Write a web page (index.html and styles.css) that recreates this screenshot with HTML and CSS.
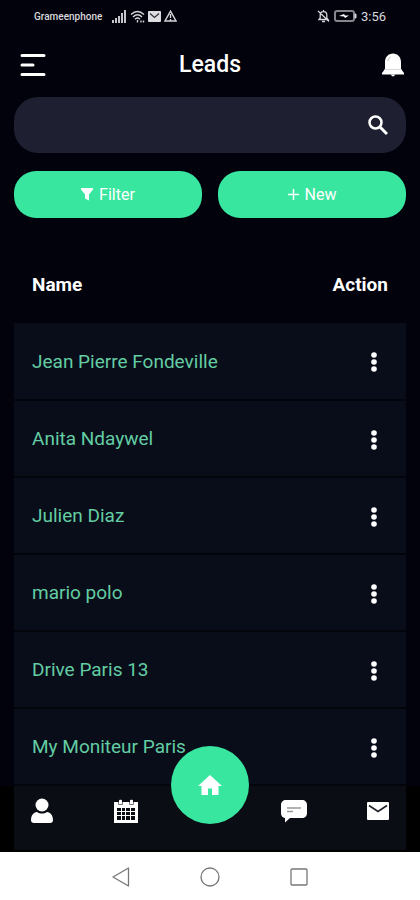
FILE: index.html
```html
<!DOCTYPE html>
<html lang="en">
<head>
    <meta charset="UTF-8">
    <meta name="viewport" content="width=device-width, initial-scale=1.0">
    <title>Leads</title>
    <link rel="stylesheet" href="styles.css">
</head>
<body>
    <div class="status-bar">
        <div class="status-left">
            <span class="carrier">Grameenphone</span>
            <svg width="15" height="13" viewBox="0 0 15 13" fill="#c4c4ca">
                <path d="M0 10h2v3H0zM3 8h2v5H3zM6 6h2v7H6zM9 3h2v10H9zM12 0h2v13h-2z"/>
            </svg>
            <svg width="15" height="13" viewBox="0 0 15 13" fill="none" stroke="#d4d4d8" stroke-width="1.4">
                <path d="M1 4.500Q7.500-1.500 14 4.500M3 7Q7.500 2.500 12 7M5 9.200Q7.500 7 10 9.200"/>
                <path d="M7.500 10v2.500M11 10.500v2M13.500 10.500v2"/>
            </svg>
            <svg width="13" height="11" viewBox="0 0 13 11">
                <rect width="13" height="11" rx="1" fill="#dedee2"/>
                <path d="M2 2.500l4.500 4 4.500-4" fill="none" stroke="#33333c" stroke-width="1.300"/>
            </svg>
            <svg width="13" height="12" viewBox="0 0 13 12" fill="none" stroke="#d4d4d8" stroke-width="1.400">
                <path d="M6.500 1.200L12 11H1zM6.500 4v4M6.500 9v1.500"/>
            </svg>
        </div>
        <div class="status-right">
            <svg width="13" height="14" viewBox="0 0 13 14" fill="none" stroke="#d4d4d8" stroke-width="1.300">
                <path d="M2 10.500h9L9.800 9V6c0-2-1.300-3.300-3.300-3.300S3.200 4 3.200 6v3zM6.500 1v1.500M5 12.500h3M1 2l11 10.500"/>
            </svg>
            <svg width="23" height="12" viewBox="0 0 23 12">
                <rect x="1" y="1" width="19" height="10" rx="2" fill="none" stroke="#85858c" stroke-width="2"/>
                <path d="M21 4h1v4h-1z" fill="#d4d4d8" stroke="#d4d4d8"/>
                <path d="M5 6l5-2 1 1.500h4L11 8l-1-1.500z" fill="#fff"/>
            </svg>
            <span class="clock">3:56</span>
        </div>
    </div>

    <header class="header">
        <button class="icon-button menu-button" type="button" aria-label="Menu">
            <svg width="26" height="24" viewBox="0 0 26 24" stroke="#fff" stroke-width="3" stroke-linecap="round">
                <path d="M2 2.500h22M2 12h11M2 21.500h22"/>
            </svg>
        </button>
        <h1>Leads</h1>
        <button class="icon-button bell-button" type="button" aria-label="Notifications">
            <svg width="22" height="24" viewBox="0 0 22 24">
                <path d="M3 16V9c0-5 3.500-8.500 8-8.500s8 3.500 8 8.500v7l3 4v1.500H0V20z" fill="#fff"/>
                <path d="M9 21.500c.5 2.500 3.500 2.500 4 0z" fill="#fff"/>
                <path d="M2.500 16.500h17" stroke="#d8d8dc"/>
                <path d="M6 8c0-2 1-3 2.500-3.800" fill="none" stroke="#bbb"/>
            </svg>
        </button>
    </header>

    <main class="content">
        <form class="search">
            <input class="search-input" type="text" aria-label="Search leads">
            <button class="search-button" type="submit" aria-label="Search">
                <svg width="20" height="20" viewBox="0 0 20 20" fill="none" stroke="#fff">
                    <circle cx="7.500" cy="7.500" r="6" stroke-width="2.500"/>
                    <path d="M12 12l7 7" stroke-width="3"/>
                </svg>
            </button>
        </form>

        <div class="actions">
            <button class="action-button" type="button">
                <svg width="12" height="13" viewBox="0 0 12 13" fill="#fff">
                    <path d="M0 0h12v1.500L8 6.500v6L4 10.500v-4L0 1.500z"/>
                </svg>
                Filter
            </button>
            <button class="action-button" type="button">
                <svg width="11" height="11" viewBox="0 0 11 11" stroke="#fff" stroke-width="1.500">
                    <path d="M5.500 0v11M0 5.500h11"/>
                </svg>
                New
            </button>
        </div>

        <table class="leads">
            <thead>
                <tr><th>Name</th><th class="action-cell">Action</th></tr>
            </thead>
            <tbody>
                <tr>
                    <td><a href="#">Jean Pierre Fondeville</a></td>
                    <td class="action-cell"><button class="more" type="button" aria-label="More"><svg width="6" height="20" viewBox="0 0 6 20" fill="#fff"><circle cx="3" cy="3" r="2.800"/><circle cx="3" cy="10" r="2.800"/><circle cx="3" cy="17" r="2.800"/></svg></button></td>
                </tr>
                <tr>
                    <td><a href="#">Anita Ndaywel</a></td>
                    <td class="action-cell"><button class="more" type="button" aria-label="More"><svg width="6" height="20" viewBox="0 0 6 20" fill="#fff"><circle cx="3" cy="3" r="2.800"/><circle cx="3" cy="10" r="2.800"/><circle cx="3" cy="17" r="2.800"/></svg></button></td>
                </tr>
                <tr>
                    <td><a href="#">Julien Diaz</a></td>
                    <td class="action-cell"><button class="more" type="button" aria-label="More"><svg width="6" height="20" viewBox="0 0 6 20" fill="#fff"><circle cx="3" cy="3" r="2.800"/><circle cx="3" cy="10" r="2.800"/><circle cx="3" cy="17" r="2.800"/></svg></button></td>
                </tr>
                <tr>
                    <td><a href="#">mario polo</a></td>
                    <td class="action-cell"><button class="more" type="button" aria-label="More"><svg width="6" height="20" viewBox="0 0 6 20" fill="#fff"><circle cx="3" cy="3" r="2.800"/><circle cx="3" cy="10" r="2.800"/><circle cx="3" cy="17" r="2.800"/></svg></button></td>
                </tr>
                <tr>
                    <td><a href="#">Drive Paris 13</a></td>
                    <td class="action-cell"><button class="more" type="button" aria-label="More"><svg width="6" height="20" viewBox="0 0 6 20" fill="#fff"><circle cx="3" cy="3" r="2.800"/><circle cx="3" cy="10" r="2.800"/><circle cx="3" cy="17" r="2.800"/></svg></button></td>
                </tr>
                <tr>
                    <td><a href="#">My Moniteur Paris</a></td>
                    <td class="action-cell"><button class="more" type="button" aria-label="More"><svg width="6" height="20" viewBox="0 0 6 20" fill="#fff"><circle cx="3" cy="3" r="2.800"/><circle cx="3" cy="10" r="2.800"/><circle cx="3" cy="17" r="2.800"/></svg></button></td>
                </tr>
            </tbody>
        </table>
    </main>

    <nav class="tab-bar">
        <a class="tab" href="#" aria-label="Profile">
            <svg width="22" height="26" viewBox="0 0 22 26" fill="#fff">
                <circle cx="11" cy="7" r="6.500"/>
                <path d="M0 22c0-4.500 2.500-7.500 6-8 3 2 7 2 10 0 3.500.5 6 3.500 6 8 0 2-1 3-3 3H3c-2 0-3-1-3-3z"/>
            </svg>
        </a>
        <a class="tab" href="#" aria-label="Calendar">
            <svg width="24" height="24" viewBox="0 0 24 24">
                <path d="M0 3h5V1.500C5 .5 8 .5 8 1.500V3h8V1.500c0-1 3-1 3 0V3h5v21H0z" fill="#fff"/>
                <path d="M3 9h4v3H3zM8 9h3v3H8zM12 9h4v3h-4zM17 9h4v3h-4zM3 13h4v3H3zM8 13h3v3H8zM12 13h4v3h-4zM17 13h4v3h-4zM3 17h4v4H3zM8 17h3v4H8zM12 17h4v4h-4zM17 17h4v4h-4z" fill="#0a0d13"/>
                <path d="M4.500 3v2.500h4V3M15.500 3v2.500h4V3" fill="none" stroke="#777"/>
            </svg>
        </a>
        <a class="home" href="#" aria-label="Home">
            <svg width="24" height="20" viewBox="0 0 24 20" fill="#fff">
                <path d="M12 0l12 11h-3.500v9H14v-6.500h-4V20H3.500v-9H0z"/>
            </svg>
        </a>
        <a class="tab tab-chat" href="#" aria-label="Messages">
            <svg width="26" height="23" viewBox="0 0 26 23">
                <path d="M5 0h16c3 0 5 2 5 5v8c0 3-2 5-5 5H9l-5 4.500V18c-2.500-.5-4-2-4-5V5c0-3 2-5 5-5z" fill="#fff"/>
                <path d="M6 8h14M6 11.500h6" stroke="#999" stroke-width="1.300"/>
            </svg>
        </a>
        <a class="tab" href="#" aria-label="Mail">
            <svg width="22" height="18" viewBox="0 0 22 18">
                <rect width="22" height="18" rx="1" fill="#fff"/>
                <path d="M2 3.500l9 6 9-6" fill="none" stroke="#22252b" stroke-width="1.800"/>
            </svg>
        </a>
    </nav>

    <div class="system-nav">
        <button class="icon-button" type="button" aria-label="Back">
            <svg width="18" height="20" viewBox="0 0 18 20" fill="none" stroke="#77777a" stroke-width="1.300" stroke-linejoin="round">
                <path d="M16.500 1v18L1 10z"/>
            </svg>
        </button>
        <button class="icon-button" type="button" aria-label="Home screen">
            <svg width="20" height="20" viewBox="0 0 20 20" fill="none" stroke="#77777a" stroke-width="1.300">
                <circle cx="10" cy="10" r="9"/>
            </svg>
        </button>
        <button class="icon-button" type="button" aria-label="Recent apps">
            <svg width="18" height="18" viewBox="0 0 18 18" fill="none" stroke="#77777a" stroke-width="1.300">
                <rect x="1" y="1" width="16" height="16" rx="1"/>
            </svg>
        </button>
    </div>
</body>
</html>
```

FILE: styles.css
```css
* {
    box-sizing: border-box;
}

body {
    display: flex;
    flex-direction: column;
    min-height: 100vh;
    margin: 0;
    font-family: Roboto, sans-serif;
    color: #fff;
    background-color: #01020c;
}

svg {
    display: block;
}

button {
    padding: 0;
    border: none;
    background: none;
    font-family: inherit;
    color: inherit;
    cursor: pointer;
}

.status-bar {
    display: flex;
    justify-content: space-between;
    align-items: center;
    height: 32px;
    padding: 0 34px;
    color: #d8d8dc;
}

.status-left,
.status-right {
    display: flex;
    align-items: center;
    gap: 3px;
}

.carrier {
    margin-right: 7px;
    font-size: 10px;
    font-weight: 500;
}

.status-right {
    gap: 4px;
}

.clock {
    font-size: 13px;
}

.header {
    display: grid;
    grid-template-columns: 1fr auto 1fr;
    align-items: center;
    height: 65px;
    padding: 0 16px;
}

.header h1 {
    margin: 0;
    font-size: 23px;
    font-weight: 500;
}

.menu-button {
    justify-self: start;
    padding-left: 4px;
}

.bell-button {
    justify-self: end;
}

.content {
    flex: 1;
    padding: 0 14px;
}

.search {
    display: flex;
    align-items: center;
    height: 56px;
    padding: 0 18px;
    border-radius: 24px;
    background-color: #1e1f30;
}

.search-input {
    flex: 1;
    min-width: 0;
    height: 100%;
    padding: 0;
    border: none;
    outline: none;
    background: none;
    font-family: inherit;
    font-size: 16px;
    color: #fff;
}

.actions {
    display: grid;
    grid-template-columns: 1fr 1fr;
    gap: 16px;
    margin-top: 18px;
}

.action-button {
    display: flex;
    justify-content: center;
    align-items: center;
    gap: 6px;
    height: 47px;
    border-radius: 22px;
    font-size: 16px;
    background-color: #39e6a0;
}

.leads {
    width: 100%;
    margin-top: 28px;
    border-collapse: collapse;
    font-size: 19px;
}

.leads th,
.leads td {
    height: 77px;
    padding: 0 18px;
    text-align: left;
}

.leads th {
    font-weight: 700;
}

.leads td {
    border-bottom: 2px solid #03040c;
    background-color: #090c19;
}

.leads a {
    color: #63cda3;
    text-decoration: none;
}

.leads .action-cell {
    text-align: right;
}

.leads .more {
    padding: 0 11px;
    vertical-align: middle;
}

/* Bottom tabs, inset to the same width as the table */
.tab-bar {
    position: relative;
    display: grid;
    grid-template-columns: repeat(5, 1fr);
    height: 66px;
    padding-bottom: 14px;
    border-bottom: 2px solid #000;
    background: linear-gradient(#0a0d13, #0a0d13) center / calc(100% - 28px) 100% no-repeat #000;
}

.tab {
    display: flex;
    justify-content: center;
    align-items: center;
}

.home {
    position: absolute;
    top: -40px;
    left: 50%;
    display: flex;
    justify-content: center;
    align-items: center;
    width: 78px;
    height: 78px;
    margin-left: -39px;
    border-radius: 50%;
    background-color: #39e6a0;
}

.tab-chat {
    grid-column: 4;
}

.system-nav {
    display: flex;
    justify-content: center;
    align-items: center;
    gap: 70px;
    height: 49px;
    background-color: #fff;
}
```
